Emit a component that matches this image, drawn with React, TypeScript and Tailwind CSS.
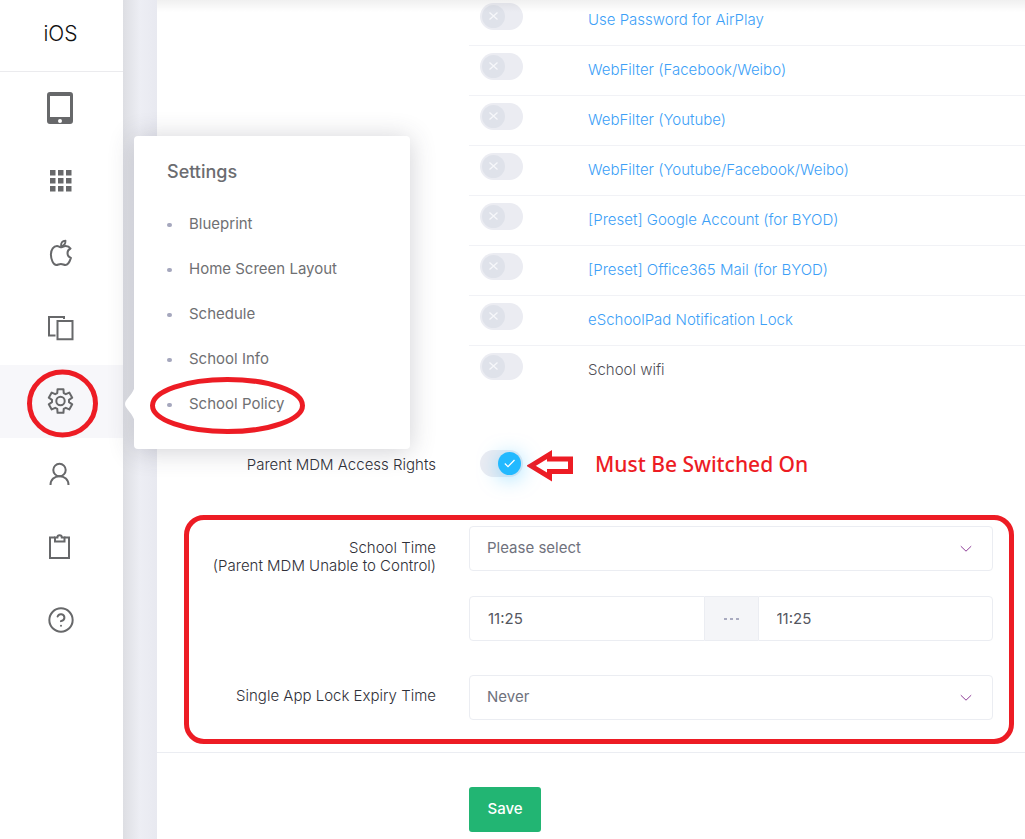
import type { ReactNode } from 'react';
import { CircleHelp } from 'lucide-react';

const policies = [
  { id: 'airplay', name: 'Use Password for AirPlay', link: true },
  { id: 'wf-fb-weibo', name: 'WebFilter (Facebook/Weibo)', link: true },
  { id: 'wf-youtube', name: 'WebFilter (Youtube)', link: true },
  { id: 'wf-all', name: 'WebFilter (Youtube/Facebook/Weibo)', link: true },
  { id: 'google', name: '[Preset] Google Account (for BYOD)', link: true },
  { id: 'office365', name: '[Preset] Office365 Mail (for BYOD)', link: true },
  { id: 'notification', name: 'eSchoolPad Notification Lock', link: true },
  { id: 'wifi', name: 'School wifi', link: false },
];

const settingsMenu = ['Blueprint', 'Home Screen Layout', 'Schedule', 'School Info', 'School Policy'];

// Six-toothed cog outline around (18.5, 18)
const cogPoints = Array.from({ length: 6 }, (_, i) => i * 60 - 90)
  .flatMap((deg) => [
    [deg - 22, 8.6],
    [deg - 14, 12.2],
    [deg + 14, 12.2],
    [deg + 22, 8.6],
  ])
  .map(([deg, r]) => {
    const rad = (deg * Math.PI) / 180;
    return `${(18.5 + r * Math.cos(rad)).toFixed(2)},${(18 + r * Math.sin(rad)).toFixed(2)}`;
  })
  .join(' ');

function Icon({ children }: { children: ReactNode }) {
  return (
    <svg
      width="37"
      height="37"
      viewBox="0 0 37 37"
      fill="none"
      stroke="currentColor"
      strokeWidth="2"
      aria-hidden="true"
    >
      {children}
    </svg>
  );
}

const navItems = [
  {
    label: 'Devices',
    icon: (
      <Icon>
        <path
          fill="currentColor"
          stroke="none"
          fillRule="evenodd"
          d="M8 1h20a3 3 0 0 1 3 3v26a3 3 0 0 1-3 3H8a3 3 0 0 1-3-3V4a3 3 0 0 1 3-3zM8 5v21h20V5zM18 28a2 2 0 1 0 0 4a2 2 0 1 0 0-4z"
        />
      </Icon>
    ),
  },
  {
    label: 'Apps',
    icon: (
      <Icon>
        <path
          fill="currentColor"
          stroke="none"
          d="M8 6h5.500v5.500h-5.500zM16 6h5.500v5.500h-5.500zM24 6h5.500v5.500h-5.500zM8 14h5.500v5.500h-5.500zM16 14h5.500v5.500h-5.500zM24 14h5.500v5.500h-5.500zM8 22h5.500v5.500h-5.500zM16 22h5.500v5.500h-5.500zM24 22h5.500v5.500h-5.500z"
        />
      </Icon>
    ),
  },
  {
    label: 'Apple',
    icon: (
      <Icon>
        <path
          strokeLinejoin="round"
          d="M18.500 10.200c1.800 0 3-1.100 5.200-1.100c2 0 3.700.8 4.800 2.400c-1.900 1-3 2.500-3 4.600c0 2.300 1.300 4 3.400 4.800c-1.100 3.600-2.900 7.100-5.500 7.100c-1.600 0-2.600-1.100-4.500-1.100s-3 1.100-4.600 1.100c-2.900 0-5.400-5.500-5.400-10.400c0-5.300 2.800-8.500 6.100-8.500c1.600 0 2.300 1.100 3.500 1.100z"
        />
        <path strokeLinejoin="round" strokeWidth="1.800" d="M19 9c-.1-2.900 1.600-5 4.500-5.300c.1 2.900-1.600 5-4.500 5.300z" />
      </Icon>
    ),
  },
  {
    label: 'Profiles',
    icon: (
      <Icon>
        <path d="M22 9V7H7v18.500h6.500" />
        <path d="M15.500 11h15v18.200h-15z" />
      </Icon>
    ),
  },
  {
    label: 'Settings',
    icon: (
      <Icon>
        <polygon points={cogPoints} strokeLinejoin="round" />
        <circle cx="18.500" cy="18" r="4.200" />
      </Icon>
    ),
  },
  {
    label: 'Users',
    icon: (
      <Icon>
        <circle cx="17.500" cy="14" r="6.200" />
        <path d="M8.500 29c0-5.500 4-8.700 9-8.700s9 3.200 9 8.700" />
      </Icon>
    ),
  },
  {
    label: 'Records',
    icon: (
      <Icon>
        <path d="M13 8.500H8V29h19V8.500h-5" />
        <path d="M13 8.500v4h9.500v-4h-2.700c0-1.400-.9-2.300-2.200-2.300s-2.200.9-2.200 2.300z" />
      </Icon>
    ),
  },
  {
    label: 'Help',
    icon: <CircleHelp size={28} strokeWidth={1.700} className="mb-0.5" aria-hidden="true" />,
  },
];

function SettingsPopover() {
  return (
    <div className="absolute left-full -bottom-[11px] z-10 ml-[11px] h-[313px] w-[276px] rounded bg-white px-[33px] pt-6 shadow-[0_2px_26px_rgba(60,60,75,0.24)]">
      <svg
        className="absolute -left-[9px] bottom-[26px] text-white"
        width="10"
        height="38"
        viewBox="0 0 10 38"
        fill="currentColor"
        aria-hidden="true"
      >
        <path d="M10 0c-1 9-10 14-10 19s9 10 10 19z" />
      </svg>
      <h2 className="text-lg leading-6 font-medium text-[#6b6c70]">Settings</h2>
      <ul className="mt-[18px]">
        {settingsMenu.map((item) => (
          <li key={item}>
            <a href="#" className="flex h-[45px] items-center gap-[17px] text-[15px] text-[#6f7073]">
              <span className="h-1 w-[5px] rounded-full bg-[#a5a7bd]" />
              {item}
            </a>
          </li>
        ))}
      </ul>
      {/* School Policy marker */}
      <svg
        className="pointer-events-none absolute bottom-[15px] left-4"
        width="155"
        height="57"
        viewBox="0 0 155 57"
        fill="none"
        stroke="#ed1c24"
        strokeWidth="5"
        aria-hidden="true"
      >
        <ellipse cx="77.500" cy="28.500" rx="75" ry="26" />
      </svg>
    </div>
  );
}

function Sidebar() {
  return (
    <aside className="w-[123px] shrink-0 bg-white">
      <div className="flex h-[72px] items-center justify-center border-b border-[#ebebee] pb-1 pr-0.5 text-[21px] font-light text-[#111]">
        iOS
      </div>
      <nav className="pt-px">
        <ul>
          {navItems.map(({ label, icon }) => {
            const active = label === 'Settings';
            return (
              <li key={label} className="relative">
                <a
                  href="#"
                  aria-label={label}
                  className={`flex h-[73px] items-center justify-center pr-0.5 text-[#67686a] ${
                    active ? 'bg-[#f7f7fa]' : ''
                  }`}
                >
                  {icon}
                </a>
                {active && (
                  <>
                    <svg
                      className="pointer-events-none absolute left-[27px] top-1"
                      width="71"
                      height="69"
                      viewBox="0 0 71 69"
                      fill="none"
                      stroke="#ed1c24"
                      strokeWidth="5"
                      aria-hidden="true"
                    >
                      <ellipse cx="35.500" cy="34.500" rx="33" ry="31.500" />
                    </svg>
                    <SettingsPopover />
                  </>
                )}
              </li>
            );
          })}
        </ul>
      </nav>
    </aside>
  );
}

function Switch({ id, labelledBy, on = false }: { id: string; labelledBy: string; on?: boolean }) {
  return (
    <span className="relative block h-[27px] w-[43px] shrink-0">
      <input
        type="checkbox"
        role="switch"
        id={id}
        aria-labelledby={labelledBy}
        defaultChecked={on}
        className="peer block h-full w-full appearance-none rounded-full bg-[#ebecf2]"
      />
      <span className="pointer-events-none absolute left-0.5 top-0.5 flex h-[23px] w-[23px] items-center justify-center rounded-full bg-[#dfe2ea] text-[#f6f7fa] peer-checked:left-[18px] peer-checked:bg-[#22b9ff] peer-checked:text-white peer-checked:shadow-[0_3px_20px_rgba(34,185,255,0.5)]">
        <svg width="11" height="11" viewBox="0 0 11 11" fill="none" stroke="currentColor" aria-hidden="true">
          {on ? (
            <path d="M.8 5.500L4 8.600L10.500 2" strokeWidth="1.300" />
          ) : (
            <path d="M1.500 1.500l8 7M9.500 1.500l-8 7" strokeWidth="1.300" />
          )}
        </svg>
      </span>
    </span>
  );
}

function SelectBox({ id, value }: { id: string; value: string }) {
  return (
    <div className="relative">
      <select
        id={id}
        className="block h-[45px] w-full appearance-none rounded border border-[#ebedf2] bg-white px-[17px] text-[15px] text-[#6f727d]"
      >
        <option>{value}</option>
      </select>
      <svg
        className="pointer-events-none absolute right-[21px] top-[19px]"
        width="12"
        height="8"
        viewBox="0 0 12 8"
        fill="none"
        stroke="#8f3f98"
        aria-hidden="true"
      >
        <path d="M.8 1.200L6 6.200L11.200 1.200" />
      </svg>
    </div>
  );
}

function FormRow({ className = '', label, children }: { className?: string; label: ReactNode; children: ReactNode }) {
  return (
    <div className={`grid grid-cols-[279px_minmax(0,1fr)] gap-x-[33px] ${className}`}>
      <div className="text-right text-[15px] leading-[18px] font-light text-[#2f3038]">{label}</div>
      <div>{children}</div>
    </div>
  );
}

const timeInput =
  'h-[45px] min-w-0 flex-1 border border-[#ebedf2] bg-white px-[18px] text-[15px] text-[#55575f]';

export default function App() {
  return (
    <div className="flex min-h-screen bg-white font-['Inter',sans-serif]">
      <Sidebar />
      <div className="w-[34px] shrink-0 bg-linear-to-r from-[#dddee3] via-[#edeef4] to-[#e8e9f0]" />

      <main className="relative min-w-0 flex-1">
        <div className="pointer-events-none absolute inset-x-0 top-0 z-10 h-3 bg-linear-to-b from-black/6 to-transparent" />

        <FormRow className="h-[396px] overflow-hidden" label={null}>
          <ul className="-mt-1">
            {policies.map((policy) => (
              <li
                key={policy.id}
                className="flex h-[50px] items-start border-b border-[#f1f2f6] pl-[11px] pt-[7px] last:border-b-0"
              >
                <Switch id={policy.id} labelledBy={`${policy.id}-name`} />
                <span id={`${policy.id}-name`} className="ml-[65px] pt-[7px] text-[15px] leading-5 font-light text-[#4f5058]">
                  {policy.link ? (
                    <a href="#" className="text-[#3d9ff7]">
                      {policy.name}
                    </a>
                  ) : (
                    policy.name
                  )}
                </span>
              </li>
            ))}
          </ul>
        </FormRow>

        <FormRow
          className="mt-[54px]"
          label={
            <label id="mdm-access-name" htmlFor="mdm-access" className="block pt-1.5">
              Parent MDM Access Rights
            </label>
          }
        >
          <div className="flex h-[27px] items-center pl-[11px]">
            <Switch id="mdm-access" labelledBy="mdm-access-name" on />
            <svg
              className="ml-1 mt-1 shrink-0"
              width="46"
              height="32"
              viewBox="0 0 46 32"
              fill="none"
              stroke="#ed1c24"
              strokeWidth="5"
              aria-hidden="true"
            >
              <path d="M4 15.800L22.500 4.500V9H43.500v12.500H22.500V27z" />
            </svg>
            <strong className="ml-[22px] whitespace-nowrap font-['Noto_Sans',sans-serif] text-[21px] leading-7 font-medium text-[#ed1c24]">
              Must Be Switched On
            </strong>
          </div>
        </FormRow>

        <div className="relative mt-[49px] pr-8">
          <div className="pointer-events-none absolute -bottom-6 -top-[11px] left-[27px] right-[11px] rounded-[20px] border-[5px] border-[#ed1c24]" />
          <FormRow
            label={
              <label htmlFor="school-time" className="block pt-[13px]">
                School Time
                <br />
                (Parent MDM Unable to Control)
              </label>
            }
          >
            <SelectBox id="school-time" value="Please select" />
            <div className="mt-[25px] flex">
              <input type="text" aria-label="Start time" defaultValue="11:25" className={`${timeInput} rounded-l`} />
              <span className="flex w-[53px] items-center justify-center gap-[3px] border-y border-[#ebedf2] bg-[#f4f5f8]">
                <i className="h-0.5 w-[3px] bg-[#a9abc0]" />
                <i className="h-0.5 w-[3px] bg-[#a9abc0]" />
                <i className="h-0.5 w-[3px] bg-[#a9abc0]" />
              </span>
              <input type="text" aria-label="End time" defaultValue="11:25" className={`${timeInput} rounded-r`} />
            </div>
          </FormRow>
          <FormRow
            className="mt-[34px]"
            label={
              <label htmlFor="lock-expiry" className="block pt-3">
                Single App Lock Expiry Time
              </label>
            }
          >
            <SelectBox id="lock-expiry" value="Never" />
          </FormRow>
        </div>

        <div className="mt-8 border-t border-[#ebedf2] pt-[34px]">
          <FormRow label={null}>
            <button
              type="button"
              className="h-[45px] w-[72px] rounded-[3px] bg-[#22b573] text-[15px] font-medium text-white"
            >
              Save
            </button>
          </FormRow>
        </div>
      </main>
    </div>
  );
}
